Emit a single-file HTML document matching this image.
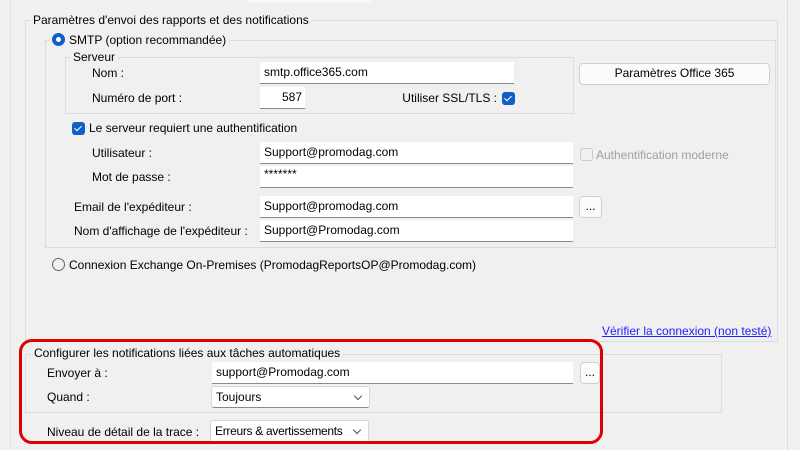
<!DOCTYPE html>
<html><head><meta charset="utf-8"><style>
*{box-sizing:border-box;margin:0;padding:0}
body{width:800px;height:450px;background:#f0f0f0;font-family:"Liberation Sans",sans-serif;font-size:12px;color:#000;position:relative;overflow:hidden}
.a{position:absolute;white-space:nowrap}
.box{position:absolute;border:1px solid #dcdcdc}
.t{position:absolute;background:#f0f0f0;padding:0 3px;white-space:nowrap;line-height:14px}
.in{position:absolute;background:#fff;border-bottom:1px solid #8a8a8a;padding-left:4px;line-height:21px;height:22px}
.btn{position:absolute;background:#fbfbfb;border:1px solid #d0d0d0;border-radius:4px;text-align:center;line-height:19px}
.cb{position:absolute;width:13px;height:13px;border-radius:3px;background:#0f5fc6}
.cb:after{content:"";position:absolute;left:4px;top:2px;width:3px;height:6px;border:solid #fff;border-width:0 1px 1px 0;transform:rotate(45deg)}
.sel:after{content:"";position:absolute;right:8px;top:6px;width:5px;height:5px;border:solid #555;border-width:0 1px 1px 0;transform:rotate(45deg)}
.sel{border:1px solid #d6d6d6;border-bottom:1px solid #8a8a8a;border-radius:3px}
</style></head><body>
<div class="a" style="left:0;top:0;width:11px;height:450px;border-right:1px solid #dedede"></div>
<div class="a" style="left:787px;top:0;width:1px;height:450px;background:#dedede"></div>
<div class="a" style="left:247px;top:0;width:124px;height:2px;background:#f8f8f8"></div>

<div class="box" style="left:25px;top:20px;width:753px;height:322px"></div>
<div class="t" style="left:30px;top:13px">Paramètres d'envoi des rapports et des notifications</div>
<div class="box" style="left:45px;top:40px;width:731px;height:208px"></div>
<div class="t" style="left:49px;top:33px;padding-left:3px"><span style="display:inline-block;width:13px;height:13px;border-radius:50%;background:#0f5fc6;vertical-align:-2px;position:relative;margin-right:4px"><span style="position:absolute;left:4px;top:4px;width:5px;height:5px;border-radius:50%;background:#fff"></span></span>SMTP (option recommandée)</div>
<div class="box" style="left:65px;top:57px;width:509px;height:57px"></div>
<div class="t" style="left:70px;top:50px">Serveur</div>
<div class="a" style="left:92px;top:66px">Nom :</div>
<div class="in" style="left:260px;top:62px;width:254px">smtp.office365.com</div>
<div class="a" style="left:92px;top:91px">Numéro de port :</div>
<div class="in" style="left:260px;top:87px;width:45px;text-align:right;padding-right:3px">587</div>
<div class="a" style="left:390px;top:91px;width:107px;text-align:right">Utiliser SSL/TLS :</div>
<div class="cb" style="left:502px;top:92px"></div>
<div class="btn" style="left:579px;top:63px;width:191px;height:22px">Paramètres Office 365</div>

<div class="cb" style="left:72px;top:122px"></div>
<div class="a" style="left:89px;top:121px">Le serveur requiert une authentification</div>
<div class="a" style="left:92px;top:146px">Utilisateur :</div>
<div class="in" style="left:260px;top:142px;width:313px">Support@promodag.com</div>
<div class="a" style="left:580px;top:148px;width:13px;height:13px;border:1px solid #ccc;border-radius:3px"></div>
<div class="a" style="left:596px;top:148px;color:#a0a0a0">Authentification moderne</div>
<div class="a" style="left:92px;top:170px">Mot de passe :</div>
<div class="in" style="left:260px;top:166px;width:313px;line-height:16px">*******</div>
<div class="a" style="left:74px;top:200px">Email de l'expéditeur :</div>
<div class="in" style="left:260px;top:196px;width:313px">Support@promodag.com</div>
<div class="btn" style="left:579px;top:196px;width:23px;height:22px">...</div>
<div class="a" style="left:74px;top:224px">Nom d'affichage de l'expéditeur :</div>
<div class="in" style="left:260px;top:220px;width:313px">Support@Promodag.com</div>

<div class="a" style="left:52px;top:258px;width:13px;height:13px;border-radius:50%;border:1px solid #666"></div>
<div class="a" style="left:69px;top:258px">Connexion Exchange On-Premises (PromodagReportsOP@Promodag.com)</div>
<div class="a" style="left:602px;top:324px;color:#2020ff;text-decoration:underline">Vérifier la connexion (non testé)</div>

<div class="box" style="left:25px;top:354px;width:697px;height:59px"></div>
<div class="t" style="left:31px;top:346px">Configurer les notifications liées aux tâches automatiques</div>
<div class="a" style="left:47px;top:366px">Envoyer à :</div>
<div class="in" style="left:212px;top:362px;width:361px">support@Promodag.com</div>
<div class="btn" style="left:580px;top:362px;width:20px;height:22px">...</div>
<div class="a" style="left:47px;top:390px">Quand :</div>
<div class="in sel" style="left:211px;top:386px;width:159px;height:22px;line-height:20px">Toujours</div>
<div class="a" style="left:47px;top:425px">Niveau de détail de la trace :</div>
<div class="in sel" style="left:210px;top:420px;width:159px;height:23px;line-height:21px;letter-spacing:-0.3px">Erreurs &amp; avertissements</div>

<div class="a" style="left:19px;top:339px;width:584px;height:105px;border:3px solid #e00000;border-radius:13px"></div>
</body></html>
